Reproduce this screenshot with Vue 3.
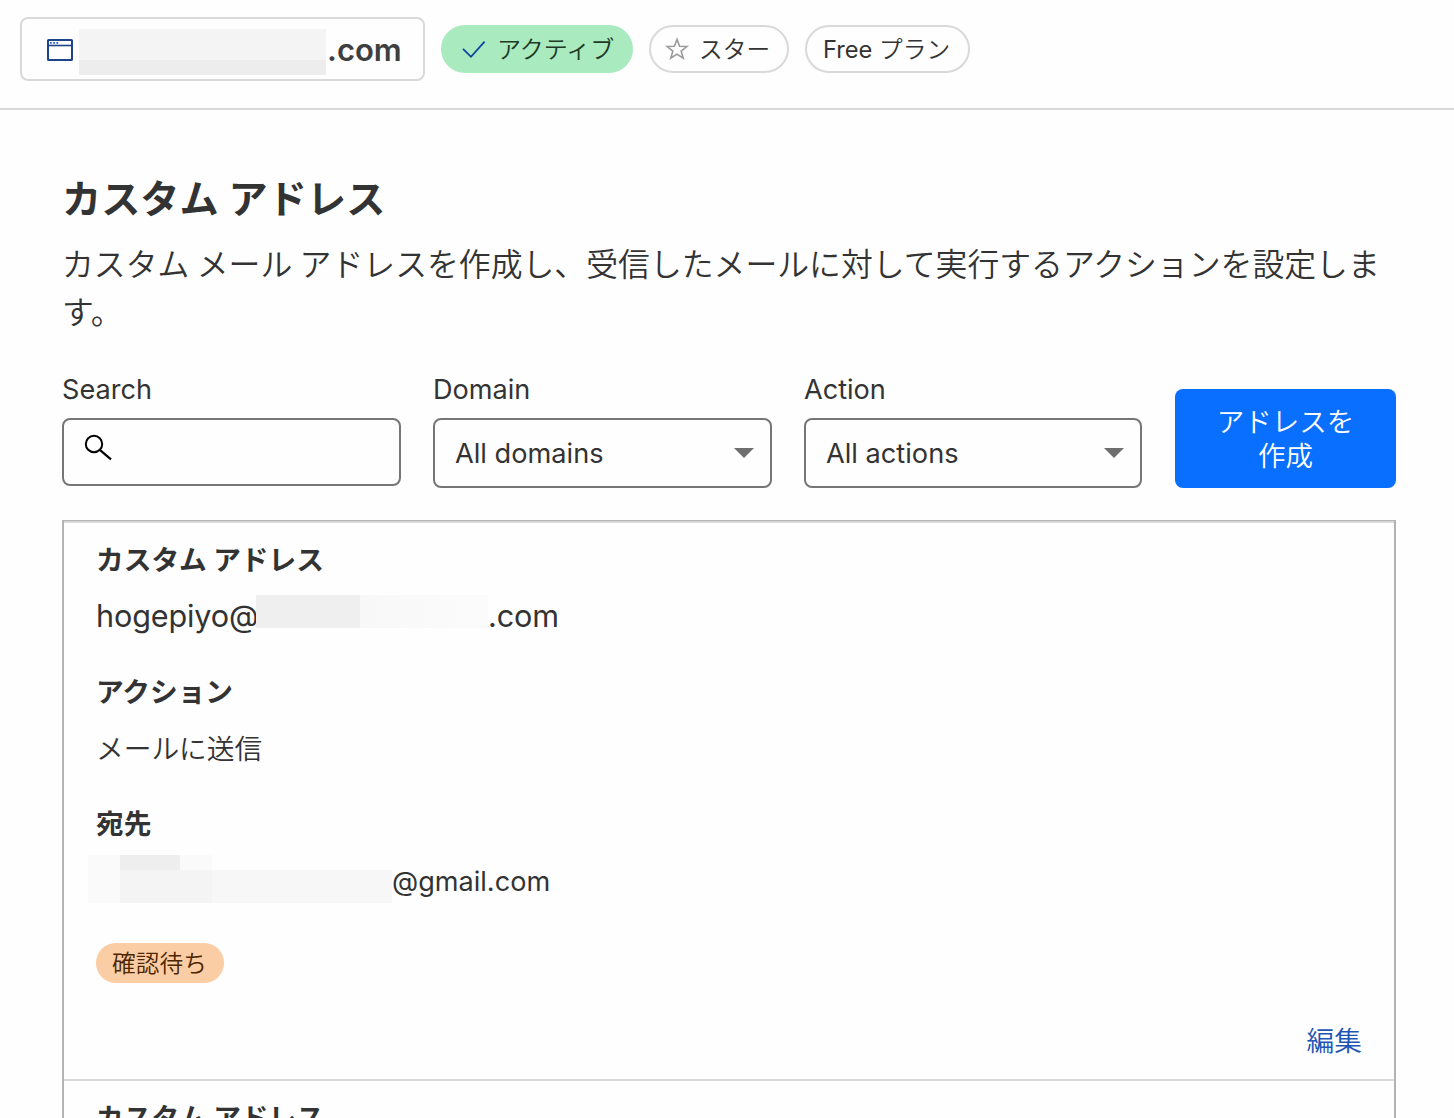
<script setup>
const filters = [
  { label: 'Domain', value: 'All domains' },
  { label: 'Action', value: 'All actions' },
]
</script>

<template>
  <div class="page">
    <header class="topbar">
      <div class="domain">
        <svg class="window" width="26" height="22" viewBox="0 0 26 22" fill="none" stroke="#1d4488">
          <rect x="1" y="1" width="24" height="20" rx="0.6" stroke-width="2" />
          <path d="M1 6.500h24" stroke-width="1.6" />
          <path d="M3 3.800h1.800M6.200 3.800h1.800M9.400 3.800h1.800" stroke="#2b62c4" stroke-width="1.8" />
        </svg>
        <span class="mask mask-domain"></span>
        <span class="tld">.com</span>
      </div>
      <span class="pill active">
        <svg width="26" height="20" viewBox="0 0 26 20" fill="none" stroke="#0b459c" stroke-width="1.8">
          <path d="M2 9.800l8 8L23.600 2.600" />
        </svg>
        <span>アクティブ</span>
      </span>
      <span class="pill star">
        <svg width="24" height="24" viewBox="0 0 24 24" fill="none" stroke="#999" stroke-width="1.6">
          <path d="M12 2.400l2.600 6.800 7.300.3-5.700 4.600 2 7.100-6.200-4.100-6.200 4.100 2-7.100L2.100 9.500l7.300-.3z" />
        </svg>
        <span>スター</span>
      </span>
      <span class="pill plan"><span><b>Free</b> プラン</span></span>
    </header>

    <main>
      <h1>カスタム アドレス</h1>
      <p class="lead">カスタム メール アドレスを作成し、受信したメールに対して実行するアクションを設定します。</p>

      <div class="filters">
        <div class="field">
          <label>Search</label>
          <div class="control search">
            <svg width="28" height="27" viewBox="0 0 28 27" fill="none" stroke="#000" stroke-width="2">
              <circle cx="10" cy="10" r="8.200" />
              <path d="M15.800 15.800L27 25.300" stroke-width="2.200" />
            </svg>
          </div>
        </div>
        <div v-for="f in filters" :key="f.label" class="field">
          <label>{{ f.label }}</label>
          <div class="control select">
            <span>{{ f.value }}</span>
            <svg width="20" height="10" viewBox="0 0 20 10"><path d="M0 0h20L10 10z" fill="#6e6e6e" /></svg>
          </div>
        </div>
        <button class="create">アドレスを<br />作成</button>
      </div>

      <section class="list">
        <article class="card">
          <h2>カスタム アドレス</h2>
          <div class="value address">
            <span class="local">hogepiyo@</span><span class="mask mask-address"></span><span class="suffix">.com</span>
          </div>
          <h2>アクション</h2>
          <div class="value action">メールに送信</div>
          <h2>宛先</h2>
          <div class="value dest">
            <span class="mask mask-dest"></span><span>@gmail.com</span>
          </div>
          <span class="badge">確認待ち</span>
          <a class="edit">編集</a>
        </article>
        <article class="card">
          <h2>カスタム アドレス</h2>
        </article>
      </section>
    </main>
  </div>
</template>

<style>
body {
  margin: 0;
  background: #fefefe;
}
</style>

<style scoped>
* {
  box-sizing: border-box;
}
.page {
  width: 1454px;
  height: 1118px;
  overflow: hidden;
  color: #333;
  font-family: Inter, "Noto Sans CJK JP", sans-serif;
}
svg {
  display: block;
  flex: none;
}
.topbar {
  height: 110px;
  border-bottom: 2px solid #d9d9d9;
  padding: 17px 0 0 20px;
  display: flex;
  align-items: flex-start;
}
.domain {
  width: 405px;
  height: 64px;
  border: 2px solid #d9d9d9;
  border-radius: 8px;
  padding-left: 25px;
  display: flex;
  align-items: center;
}
.window {
  margin-top: 2px;
}
.mask {
  display: block;
  flex: none;
}
.mask-domain {
  width: 247px;
  height: 46px;
  margin: 5px 0 0 6px;
  background: linear-gradient(#f4f4f4 31px, #ededed 31px);
}
.tld {
  margin-left: 1px;
  font-size: 31px;
  font-weight: 600;
  color: #3f3f3f;
}
.pill {
  height: 48px;
  margin: 8px 0 0 16px;
  border: 2px solid #d9d9d9;
  border-radius: 24px;
  display: flex;
  align-items: center;
  font-size: 23.7px;
  font-weight: 350;
  line-height: 44px;
  white-space: nowrap;
}
.pill span {
  padding-top: 2px;
}
.pill b {
  font-weight: 400;
}
.active {
  width: 192px;
  border-color: #a9eabf;
  background: #a9eabf;
  color: #1d3b26;
  padding-left: 18px;
  gap: 10px;
  font-size: 24px;
}
.star {
  width: 140px;
  padding-left: 14px;
  gap: 10px;
}
.plan {
  width: 165px;
  padding-left: 16px;
}
main {
  width: 1334px;
  margin-left: 62px;
  padding-top: 61px;
}
h1 {
  margin: 0;
  font-size: 39.2px;
  line-height: 56px;
  font-weight: 600;
}
.lead {
  width: 1334px;
  margin: 14px 0 0;
  font-size: 31.85px;
  line-height: 48px;
  font-weight: 350;
  word-spacing: -1.6px;
}
.filters {
  height: 116px;
  margin-top: 35px;
  display: flex;
  align-items: flex-start;
  gap: 32px;
}
.field {
  flex: none;
  width: 339px;
}
.field:nth-child(3) {
  width: 338px;
}
label {
  display: block;
  height: 46px;
  font-size: 27.100px;
  line-height: 36px;
}
.control {
  border: 2px solid #767676;
  border-radius: 8px;
  display: flex;
}
.search {
  height: 68px;
  padding: 14px 0 0 20px;
}
.select {
  height: 70px;
  padding: 0 16px 0 20px;
  align-items: center;
  justify-content: space-between;
  font-size: 27.2px;
}
.create {
  flex: none;
  width: 221px;
  height: 99px;
  margin: 17px 0 0 1px;
  padding: 1px 0 0;
  border: 0;
  border-radius: 8px;
  background: #086fff;
  color: #fff;
  font: 350 27.5px/34px Inter, "Noto Sans CJK JP", sans-serif;
}
.list {
  margin-top: 32px;
  border: 2px solid #b3b3b3;
  border-top: 1px solid #b3b3b3;
  border-bottom: 0;
}
.card {
  height: 561px;
  padding: 17px 32px 0;
  border-top: 2px solid #d9d9d9;
  display: flex;
  flex-direction: column;
  align-items: flex-start;
}
.card:first-child {
  height: 558px;
}
h2 {
  margin: 0;
  font-size: 27.7px;
  line-height: 40px;
  font-weight: 600;
  word-spacing: -0.6px;
}
.value {
  height: 56px;
  line-height: 56px;
  display: flex;
  white-space: nowrap;
}
.address {
  margin: 8px 0 28px;
  font-size: 30.6px;
  letter-spacing: -0.15px;
}
.local {
  width: 160px;
  overflow: hidden;
}
.mask-address {
  width: 232px;
  height: 33px;
  margin-top: 7px;
  background: linear-gradient(90deg, #efefef 0 104px, #f8f8f8 104px, #fbfbfb 100%);
}
.action {
  margin: 9px 0 27px;
  font-size: 27.7px;
  font-weight: 350;
}
.dest {
  margin: 10px 0 28px;
  font-size: 27.1px;
}
.mask-dest {
  width: 304px;
  height: 48px;
  margin: 1px 0 0 -8px;
  background:
    linear-gradient(#eee, #eee) 32px 0 / 60px 15px no-repeat,
    linear-gradient(#fafafa, #fafafa) 0 0 / 124px 15px no-repeat,
    linear-gradient(90deg, #fafafa 32px, #f4f4f4 32px 124px, #f7f7f7 124px) 0 15px / 100% 33px no-repeat;
}
.badge {
  width: 128px;
  height: 40px;
  margin-top: 5px;
  border-radius: 20px;
  background: #fbcda5;
  color: #4d2600;
  font-size: 23.7px;
  font-weight: 350;
  line-height: 41px;
  text-align: center;
  text-indent: -1px;
}
.edit {
  align-self: flex-end;
  margin-top: 38px;
  font-size: 27.7px;
  font-weight: 350;
  line-height: 40px;
  color: #1d54b5;
}
</style>
